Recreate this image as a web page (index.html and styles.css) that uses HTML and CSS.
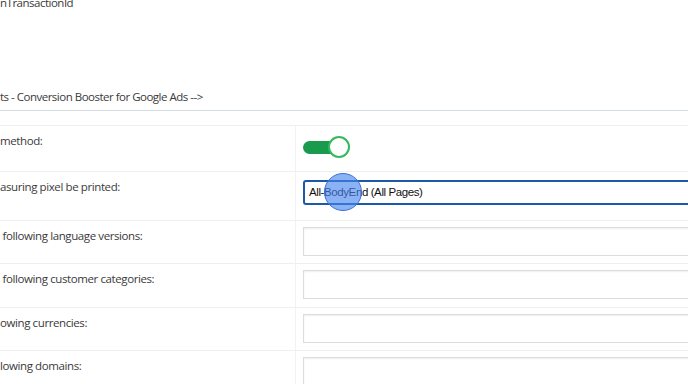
FILE: index.html
```html
<!DOCTYPE html>
<html>
<head>
<meta charset="utf-8">
<link rel="stylesheet" href="styles.css">
</head>
<body>
<div class="page">
  <div class="top-text">nTransactionId</div>
  <div class="section-head">ts - Conversion Booster for Google Ads --&gt;</div>
  <div class="settings">
    <div class="row row-1">
      <div class="label">method:</div>
      <div class="field">
        <div class="toggle"><span class="track"></span><span class="knob"></span></div>
      </div>
    </div>
    <div class="row row-2">
      <div class="label">asuring pixel be printed:</div>
      <div class="field">
        <div class="select">All-BodyEnd (All Pages)<span class="click-dot"></span></div>
      </div>
    </div>
    <div class="row row-3">
      <div class="label">&nbsp;following language versions:</div>
      <div class="field"><div class="input"></div></div>
    </div>
    <div class="row row-4">
      <div class="label">&nbsp;following customer categories:</div>
      <div class="field"><div class="input"></div></div>
    </div>
    <div class="row row-5">
      <div class="label">owing currencies:</div>
      <div class="field"><div class="input"></div></div>
    </div>
    <div class="row row-6">
      <div class="label">lowing domains:</div>
      <div class="field"><div class="input"></div></div>
    </div>
  </div>
</div>
</body>
</html>
```

FILE: styles.css
```css
html, body {
  margin: 0;
  padding: 0;
  background: #ffffff;
  overflow: hidden;
}
body {
  width: 688px;
  height: 384px;
  font-family: "Open Sans", "Noto Sans", sans-serif;
  color: #3a3a3a;
}
.page {
  display: flex;
  flex-direction: column;
}
.top-text {
  font-size: 11.5px;
  letter-spacing: -0.5px;
  line-height: 14px;
  margin-top: -4px;
  height: 14px;
}
.section-head {
  margin-top: 80px;
  font-size: 11.5px;
  letter-spacing: -0.5px;
  line-height: 14px;
  height: 20px;
  border-bottom: 1.5px solid #d3dce3;
}
.settings {
  margin-top: 14px;
  display: flex;
  flex-direction: column;
  width: 720px;
}
.row {
  display: grid;
  grid-template-columns: 295px 1fr;
  border-top: 1px solid #efefef;
}
.row-1 { height: 45px; }
.row-2 { height: 48px; }
.row-3 { height: 42px; }
.row-4 { height: 43px; }
.row-5 { height: 42px; }
.row-6 { height: 40px; }
.label {
  font-size: 11.5px;
  letter-spacing: -0.4px;
  line-height: 14px;
  padding-top: 8px;
  white-space: pre;
}
.field {
  border-left: 1px solid #f2f2f2;
  padding-left: 7px;
  padding-top: 6px;
}
.row-1 .field { padding-top: 10px; }
.toggle {
  position: relative;
  width: 48px;
  height: 22px;
}
.track {
  position: absolute;
  left: 0;
  top: 5px;
  width: 40px;
  height: 13px;
  border-radius: 7px;
  background: #1a9a4c;
}
.knob {
  position: absolute;
  left: 25px;
  top: 0;
  width: 18px;
  height: 18px;
  border-radius: 50%;
  background: #ffffff;
  border: 2px solid #33b95e;
}
.select {
  position: relative;
  box-sizing: border-box;
  height: 25px;
  border: 2px solid #1c5aa8;
  border-radius: 3px;
  font-family: "Liberation Sans", Arial, sans-serif;
  font-size: 11.5px;
  letter-spacing: -0.4px;
  line-height: 21px;
  padding-left: 4px;
  color: #111;
  margin-top: 2px;
}
.click-dot {
  position: absolute;
  left: 19px;
  top: -9px;
  width: 36px;
  height: 36px;
  border-radius: 50%;
  background: rgba(70, 130, 240, 0.62);
  border: 1.5px solid #3a6fd8;
}
.input {
  box-sizing: border-box;
  height: 29px;
  border: 1px solid #dcdcdc;
  box-shadow: inset 0 1px 2px rgba(0,0,0,0.07);
  background: #fff;
}
```
